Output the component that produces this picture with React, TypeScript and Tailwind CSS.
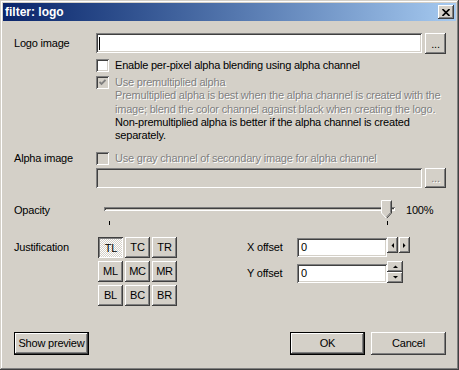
import React from 'react';

const raised = "shadow-[inset_-1px_-1px_#404040,inset_1px_1px_#ffffff,inset_-2px_-2px_#808080]";
const sunken = "shadow-[inset_1px_1px_#808080,inset_-1px_-1px_#ffffff,inset_2px_2px_#404040,inset_-2px_-2px_#d4d0c8]";
const disabledText = "text-[#808080] [text-shadow:1px_1px_0_#ffffff]";

function Checkbox({ checked = false, disabled = false }: { checked?: boolean; disabled?: boolean }) {
    return (
        <div className={`flex h-[13px] w-[13px] shrink-0 items-center justify-center ${sunken} ${disabled ? 'bg-[#d4d0c8]' : 'bg-white'}`}>
            {checked && (
                <svg width="7" height="7" viewBox="0 0 7 7">
                    <path d="M0.5 3 L2.5 5 L6.5 1" fill="none" stroke={disabled ? '#808080' : '#000'} strokeWidth="1.8" />
                </svg>
            )}
        </div>
    );
}

function Button({ label, isDefault, className = '' }: { label: string; isDefault?: boolean; className?: string }) {
    if (isDefault) {
        return (
            <div className={`border border-black ${className}`}>
                <div className={`flex h-full w-full items-center justify-center bg-[#d4d0c8] ${raised}`}>{label}</div>
            </div>
        );
    }
    return <div className={`flex items-center justify-center bg-[#d4d0c8] ${raised} ${className}`}>{label}</div>;
}

function Arrow({ dir }: { dir: 'left' | 'right' | 'up' | 'down' }) {
    const pts = {
        left: '3,0 3,5 0.5,2.5',
        right: '0,0 0,5 2.5,2.5',
        up: '0,3 5,3 2.5,0.5',
        down: '0,0 5,0 2.5,2.5',
    }[dir];
    const horiz = dir === 'left' || dir === 'right';
    return (
        <svg width={horiz ? 3 : 5} height={horiz ? 5 : 3} viewBox={horiz ? '0 0 3 5' : '0 0 5 3'}>
            <polygon points={pts} fill="#000" />
        </svg>
    );
}

const just = ['TL', 'TC', 'TR', 'ML', 'MC', 'MR', 'BL', 'BC', 'BR'];

export default function App() {
    return (
        <div className="h-[370px] w-[459px] bg-[#d4d0c8] p-[3px] font-['Liberation_Sans',Arial,sans-serif] text-[11px] tracking-[-0.2px] text-black shadow-[inset_-1px_-1px_#404040,inset_1px_1px_#d4d0c8,inset_-2px_-2px_#808080,inset_2px_2px_#ffffff]">
            {/* title bar */}
            <div className="flex h-[18px] items-center justify-between bg-linear-to-r from-[#0a246a] to-[#a6caf0] px-[2px]">
                <span className="text-[12px] font-bold tracking-normal text-white">filter: logo</span>
                <div className={`flex h-[14px] w-[16px] items-center justify-center bg-[#d4d0c8] ${raised}`}>
                    <svg width="8" height="7" viewBox="0 0 8 7">
                        <path d="M0.5 0 L7.5 7 M7.5 0 L0.5 7" stroke="#000" strokeWidth="1.6" />
                    </svg>
                </div>
            </div>

            <div className="flex flex-col pl-[11px] pr-[10px]">
                {/* logo image */}
                <div className="mt-[12px] flex items-start">
                    <div className="h-[20px] w-[82px] leading-[20px]">Logo image</div>
                    <div className={`flex h-[20px] w-[326px] items-center bg-white pl-[3px] ${sunken}`}>
                        <span className="h-[13px] w-px bg-black" />
                    </div>
                    <div className={`ml-[3px] flex h-[21px] w-[21px] items-end justify-center bg-[#d4d0c8] pb-[4px] leading-none ${raised}`}>...</div>
                </div>

                <div className="mt-[5px] flex h-[13px] items-center pl-[82px]">
                    <Checkbox />
                    <span className="ml-[6px] leading-[13px]">Enable per-pixel alpha blending using alpha channel</span>
                </div>

                <div className="mt-[4px] flex h-[66px] items-start pl-[82px]">
                    <Checkbox checked disabled />
                    <div className="ml-[6px] flex flex-col whitespace-nowrap leading-[13.3px]">
                        <span className={disabledText}>Use premultiplied alpha</span>
                        <span className={disabledText}>Premultiplied alpha is best when the alpha channel is created with the</span>
                        <span className={disabledText}>image; blend the color channel against black when creating the logo.</span>
                        <span>Non-premultiplied alpha is better if the alpha channel is created</span>
                        <span>separately.</span>
                    </div>
                </div>

                {/* alpha image */}
                <div className="mt-[10px] flex h-[13px] items-center">
                    <div className="w-[82px] leading-[13px]">Alpha image</div>
                    <Checkbox disabled />
                    <span className={`ml-[6px] leading-[13px] ${disabledText}`}>Use gray channel of secondary image for alpha channel</span>
                </div>
                <div className="mt-[3px] flex items-start pl-[82px]">
                    <div className={`h-[20px] w-[326px] bg-[#d4d0c8] ${sunken}`} />
                    <div className={`ml-[3px] flex h-[20px] w-[21px] items-end justify-center bg-[#d4d0c8] pb-[4px] leading-none ${raised} ${disabledText}`}>...</div>
                </div>

                {/* opacity */}
                <div className="mt-[11px] flex items-start">
                    <div className="mt-[5px] w-[82px] leading-[13px]">Opacity</div>
                    <div className="relative h-[26px] w-[302px]">
                        <div className={`absolute left-[8px] right-[3px] top-[8px] h-[4px] bg-[#d4d0c8] ${sunken}`} />
                        <svg className="absolute left-[285px] top-[1px]" width="12" height="20" viewBox="0 0 12 20">
                            <polygon points="0,0 11,0 11,13 5.5,19 0,13" fill="#d4d0c8" />
                            <polyline points="0.5,13 0.5,0.5 10.5,0.5" fill="none" stroke="#ffffff" />
                            <polyline points="10.5,0.5 10.5,13 5.5,18.5" fill="none" stroke="#404040" />
                            <polyline points="9.5,1.5 9.5,12.6 5.5,17" fill="none" stroke="#808080" />
                            <line x1="0.5" y1="13" x2="5.5" y2="18.5" stroke="#ffffff" />
                        </svg>
                        <div className="absolute left-[13px] top-[22px] h-[4px] w-px bg-black" />
                        <div className="absolute left-[291px] top-[22px] h-[4px] w-px bg-black" />
                    </div>
                    <div className="ml-[8px] mt-[5px] leading-[13px]">100%</div>
                </div>

                {/* justification + offsets */}
                <div className="mt-[12px] flex items-start">
                    <div className="mt-[4px] w-[82px] leading-[13px]">Justification</div>
                    <div className="ml-[2px] grid grid-cols-[25px_25px_25px] gap-x-[2px] gap-y-[3px]">
                        {just.map((j) =>
                            j === 'TL' ? (
                                <div
                                    key={j}
                                    className="flex h-[21px] items-center justify-center bg-[conic-gradient(#ffffff_25%,#d4d0c8_0_50%,#ffffff_0_75%,#d4d0c8_0)] bg-[length:2px_2px] pl-px pt-px shadow-[inset_1px_1px_#404040,inset_-1px_-1px_#ffffff,inset_2px_2px_#808080]"
                                >
                                    {j}
                                </div>
                            ) : (
                                <Button key={j} label={j} className="h-[21px]" />
                            )
                        )}
                    </div>
                    <div className="ml-[70px] flex flex-col">
                        <div className="flex items-start">
                            <div className="mt-[1px] h-[19px] w-[50px] leading-[19px]">X offset</div>
                            <div className={`mt-[1px] h-[19px] w-[90px] bg-white pl-[4px] leading-[19px] ${sunken}`}>0</div>
                            <div className="flex gap-[1px]">
                                <div className={`flex h-[16px] w-[11px] items-center justify-center bg-[#d4d0c8] ${raised}`}><Arrow dir="left" /></div>
                                <div className={`flex h-[16px] w-[11px] items-center justify-center bg-[#d4d0c8] ${raised}`}><Arrow dir="right" /></div>
                            </div>
                        </div>
                        <div className="mt-[4px] flex items-start">
                            <div className="mt-[3px] h-[19px] w-[50px] leading-[19px]">Y offset</div>
                            <div className={`mt-[3px] h-[19px] w-[90px] bg-white pl-[4px] leading-[19px] ${sunken}`}>0</div>
                            <div className="flex flex-col">
                                <div className={`flex h-[11px] w-[16px] items-center justify-center bg-[#d4d0c8] ${raised}`}><Arrow dir="up" /></div>
                                <div className={`flex h-[11px] w-[16px] items-center justify-center bg-[#d4d0c8] ${raised}`}><Arrow dir="down" /></div>
                            </div>
                        </div>
                    </div>
                </div>

                {/* bottom buttons */}
                <div className="mt-[26px] flex items-start justify-between">
                    <Button label="Show preview" isDefault className="h-[23px] w-[75px]" />
                    <div className="flex gap-[6px]">
                        <Button label="OK" isDefault className="h-[23px] w-[75px]" />
                        <Button label="Cancel" className="h-[23px] w-[75px]" />
                    </div>
                </div>
            </div>
        </div>
    );
}
